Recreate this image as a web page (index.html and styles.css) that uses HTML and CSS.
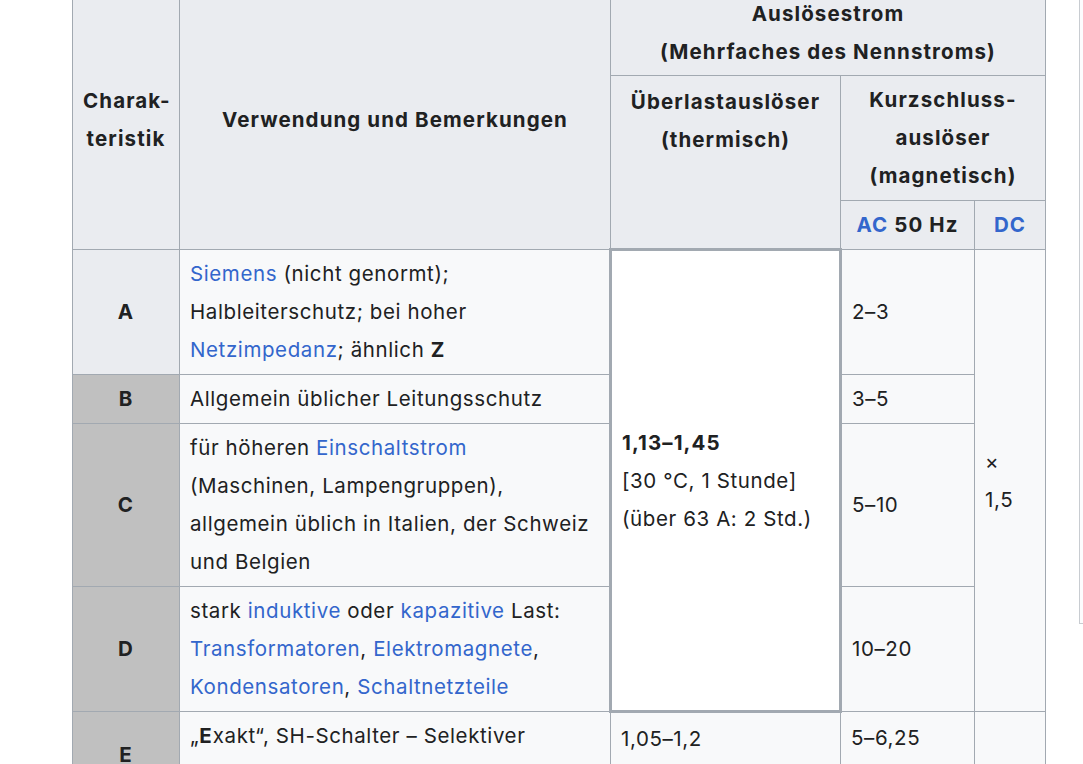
FILE: index.html
```html
<!DOCTYPE html>
<html lang="de">
<head>
<meta charset="utf-8">
<title>Auslösecharakteristik</title>
<link rel="stylesheet" href="styles.css">
</head>
<body>
<div class="page">
  <table class="wikitable">
    <colgroup>
      <col class="c1"><col class="c2"><col class="c3"><col class="c4"><col class="c5">
    </colgroup>
    <thead>
      <tr>
        <th rowspan="3">Charak-<br>teristik</th>
        <th rowspan="3">Verwendung und Bemerkungen</th>
        <th colspan="3">Auslösestrom<br>(Mehrfaches des Nennstroms)</th>
      </tr>
      <tr>
        <th rowspan="2" class="top">Überlastauslöser<br>(thermisch)</th>
        <th colspan="2">Kurzschluss-<br>auslöser<br>(magnetisch)</th>
      </tr>
      <tr>
        <th><a href="#">AC</a> 50 Hz</th>
        <th><a href="#">DC</a></th>
      </tr>
    </thead>
    <tbody>
      <tr>
        <th class="key light">A</th>
        <td><a href="#">Siemens</a> (nicht genormt);<br>Halbleiterschutz; bei hoher<br><a href="#">Netzimpedanz</a>; ähnlich <b>Z</b></td>
        <td rowspan="4" class="hl"><b>1,13–1,45</b><br>[30 °C, 1 Stunde]<br>(über 63 A: 2 Std.)</td>
        <td>2–3</td>
        <td rowspan="4">×<br>1,5</td>
      </tr>
      <tr>
        <th class="key">B</th>
        <td>Allgemein üblicher Leitungsschutz</td>
        <td>3–5</td>
      </tr>
      <tr>
        <th class="key">C</th>
        <td>für höheren <a href="#">Einschaltstrom</a><br>(Maschinen, Lampengruppen),<br>allgemein üblich in Italien, der Schweiz<br>und Belgien</td>
        <td>5–10</td>
      </tr>
      <tr>
        <th class="key">D</th>
        <td>stark <a href="#">induktive</a> oder <a href="#">kapazitive</a> Last:<br><a href="#">Transformatoren</a>, <a href="#">Elektromagnete</a>,<br><a href="#">Kondensatoren</a>, <a href="#">Schaltnetzteile</a></td>
        <td>10–20</td>
      </tr>
      <tr>
        <th class="key">E</th>
        <td>„<b>E</b>xakt“, SH-Schalter – Selektiver<br>Hauptleitungsschutzschalter</td>
        <td class="top">1,05–1,2</td>
        <td class="top">5–6,25</td>
        <td></td>
      </tr>
    </tbody>
  </table>
  <div class="side"></div>
</div>
</body>
</html>
```

FILE: styles.css
```css
html, body {
  margin: 0;
  padding: 0;
  background: #ffffff;
  overflow: hidden;
}

body {
  font-family: "Inter", "Liberation Sans", sans-serif;
  font-size: 20.5px;
  line-height: 38px;
  letter-spacing: 0.6px;
  color: #202122;
}

.page {
  display: flex;
  align-items: flex-start;
  gap: 33px;
  padding-left: 72px;
  margin-top: -10px;
}

.wikitable {
  flex: 0 0 auto;
  border-collapse: collapse;
  table-layout: fixed;
  width: 974px;
  background: #f8f9fa;
  border: 1px solid #a2a9b1;
}

.c1 { width: 107px; }
.c2 { width: 431px; }
.c3 { width: 230px; }
.c4 { width: 134px; }
.c5 { width: 71px; }

.wikitable th,
.wikitable td {
  border: 1px solid #a2a9b1;
  padding: 5px 10px;
  vertical-align: middle;
  text-align: left;
}

.wikitable thead tr:first-child th {
  padding-top: 4px;
  padding-bottom: 4px;
}

.wikitable th {
  background: #eaecf0;
  font-weight: bold;
  letter-spacing: 1.1px;
  text-align: center;
}

.wikitable b {
  letter-spacing: 1.1px;
}

.wikitable th.key {
  background: #c0c0c0;
}

.wikitable th.key.light {
  background: #eaecf0;
}

.wikitable .top {
  vertical-align: top;
  padding-top: 7px;
}

.wikitable td.hl {
  background: #ffffff;
  border: 3px solid #a2a9b1;
}

a {
  color: #3366cc;
  text-decoration: none;
}

.side {
  flex: 1 0 200px;
  height: 632px;
  border: 1px solid #c8ccd1;
  background: #fcfcfd;
}
```
